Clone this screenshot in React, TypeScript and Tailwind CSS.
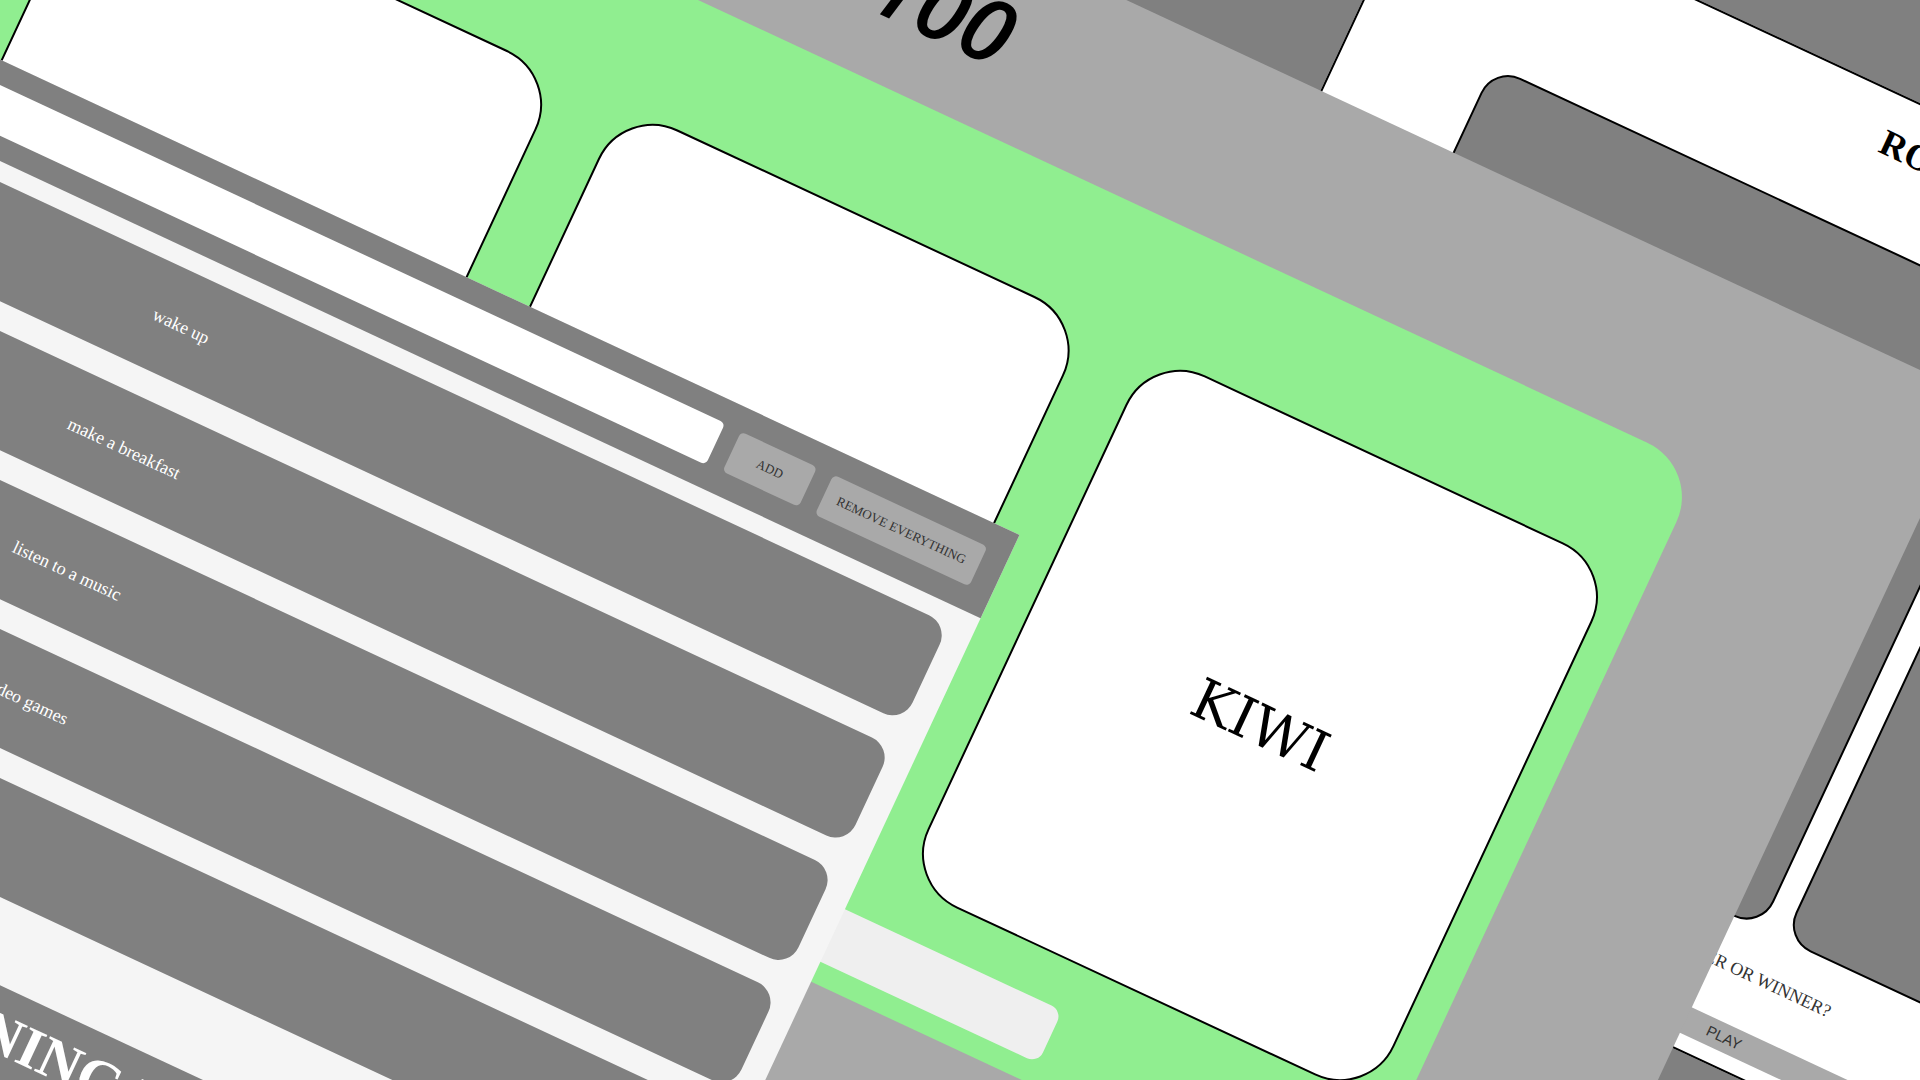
const tasks = ['wake up', 'make a breakfast', 'listen to a music', 'play video games', 'go to bed'];
const words = ['', '', 'KIWI'];

function GameWindow() {
  return (
    <section className="absolute left-[1235px] top-[-718px] w-[1532px] border-2 border-black bg-white px-36 pb-[15px] pt-7 text-center">
      <h2 className="text-[37px] font-bold leading-10">ROCK - PAPER - SCISSORS</h2>
      <div className="mt-[76px] flex gap-6">
        <div className="h-[670px] flex-1 rounded-[30px] border-2 border-black bg-[#808080]" />
        <div className="h-[670px] flex-1 rounded-[30px] border-2 border-black bg-[#808080]" />
      </div>
      <p className="mt-8 text-lg text-[#333333]">LOSER OR WINNER?</p>
      <button
        type="button"
        className="mt-10 h-7 w-full bg-[#a9a9a9] font-['Liberation_Sans',sans-serif] text-[15px] text-[#333333]"
      >
        PLAY
      </button>
    </section>
  );
}

function WordsWindow() {
  return (
    <section className="absolute left-[-227px] top-[-476px] h-[1600px] w-[2186px] bg-[#a9a9a9]">
      <h1 className="flex h-[181px] items-center justify-center pb-4 pr-3.5 font-['Open_Sans',sans-serif] text-[88px] font-semibold italic leading-none">
        100
      </h1>
      <div className="mx-[219px] rounded-[60px] bg-[#90ee90] px-[34px] pb-[22px] pt-[126px]">
        <div className="flex gap-[68px]">
          {words.map((word, i) => (
            <div
              key={i}
              className="flex h-[588px] flex-1 items-center justify-center rounded-[60px] border-2 border-black bg-white font-['DejaVu_Serif',serif] text-[56px]"
            >
              {word}
            </div>
          ))}
        </div>
        <input
          type="text"
          aria-label="Answer"
          className="mx-auto mt-12 block h-[58px] w-[1048px] rounded-xl bg-[#efefef] text-center text-3xl outline-none"
        />
      </div>
    </section>
  );
}

function TodoWindow() {
  return (
    <section className="absolute left-[-546px] top-[54px] w-[1696px] bg-[#f5f5f5]">
      <form className="flex h-[92px] items-center gap-[18px] bg-[#808080] px-6">
        <input
          type="text"
          aria-label="New task"
          className="h-[46px] flex-1 rounded-[5px] bg-white px-4 text-lg outline-none"
        />
        <button type="button" className="h-11 w-[84px] rounded-[5px] bg-[#a9a9a9] text-[13px] text-[#333333]">
          ADD
        </button>
        <button
          type="button"
          className="h-11 w-[170px] whitespace-nowrap rounded-[5px] bg-[#a9a9a9] text-[13px] text-[#333333]"
        >
          REMOVE EVERYTHING
        </button>
      </form>
      <ul className="mt-[19px] flex flex-col gap-[27px] px-[26px] text-lg text-white">
        {tasks.map((task) => (
          <li key={task} className="flex h-[108px] items-center justify-center rounded-[22px] bg-[#808080]">
            {task}
          </li>
        ))}
      </ul>
      <footer className="mt-20 flex h-[300px] bg-[#808080] pl-[822px] text-[58px] font-bold text-white">
        <h2>MORNING LIST</h2>
      </footer>
    </section>
  );
}

export default function App() {
  return (
    <main className="relative h-screen w-full overflow-hidden bg-[#808080] font-['Liberation_Serif',serif] text-black">
      <div className="absolute left-0 top-0 origin-top-left rotate-[25deg]">
        <GameWindow />
        <WordsWindow />
        <TodoWindow />
      </div>
    </main>
  );
}
